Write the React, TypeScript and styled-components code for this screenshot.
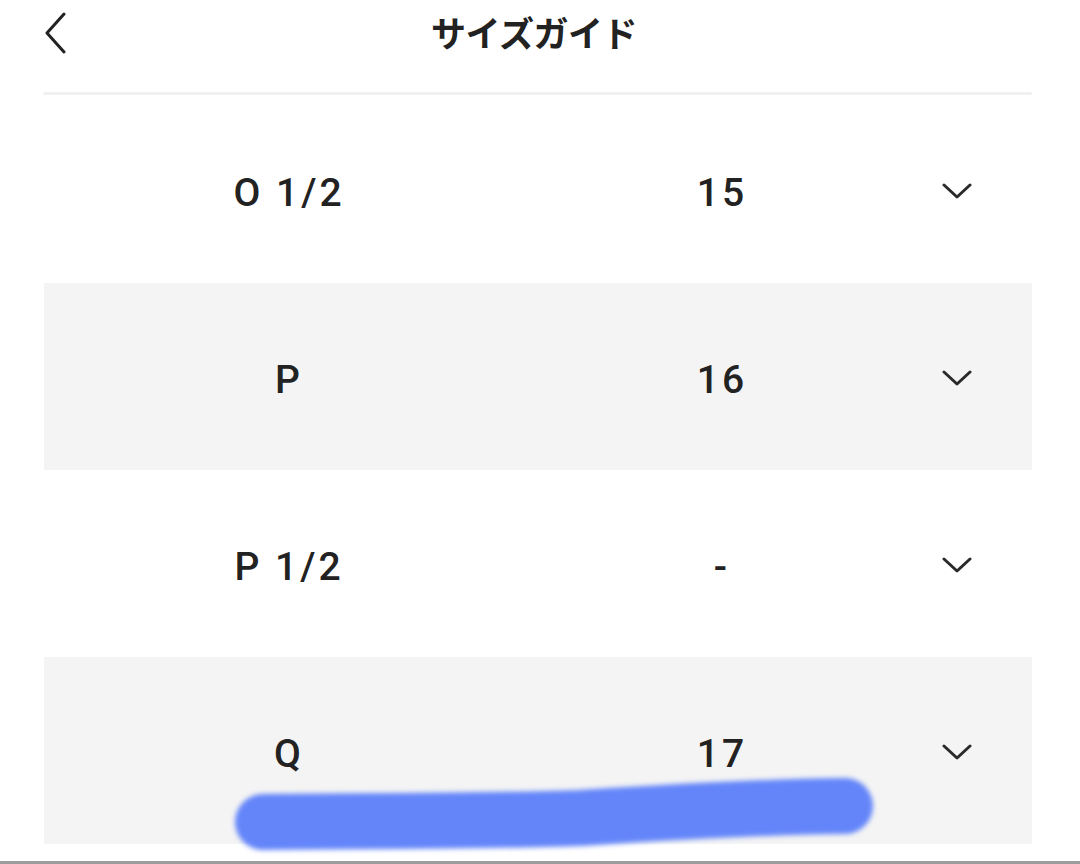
import React from "react";
import styled, { createGlobalStyle } from "styled-components";

const Global = createGlobalStyle`
  html, body { margin: 0; padding: 0; background: #ffffff; }
  body { font-family: Roboto, "Liberation Sans", "Noto Sans CJK JP", sans-serif; color: #222; overflow: hidden; }
`;

const Page = styled.div`
  position: relative;
  width: 1080px;
  height: 864px;
  display: flex;
  flex-direction: column;
  background: #fff;
  overflow: hidden;
`;

const Header = styled.header`
  height: 92px;
  display: grid;
  grid-template-columns: 1fr auto 1fr;
  align-items: start;
  padding: 0 48px 0 44px;
`;

const BackButton = styled.button`
  border: 0;
  background: none;
  padding: 0;
  margin-top: 11px;
  width: 30px;
  height: 44px;
  justify-self: start;
  display: flex;
  align-items: center;
  color: #222;
`;

const Title = styled.h1`
  margin: 11px 8px 0 0;
  font-family: "Noto Sans CJK JP", sans-serif;
  font-weight: 700;
  font-size: 35px;
  line-height: 42px;
  color: #222;
  letter-spacing: -0.5px;
`;

const Divider = styled.div`
  height: 3px;
  margin: 0 48px 0 43px;
  background: #f1f1f1;
  border-radius: 2px;
`;

const List = styled.div`
  margin: 1px 48px 0 44px;
  display: flex;
  flex-direction: column;
`;

const Row = styled.div<{ $shaded: boolean }>`
  height: 187px;
  display: grid;
  grid-template-columns: 490px 376px 94px 1fr;
  align-items: center;
  background: ${(p) => (p.$shaded ? "#f4f4f4" : "#ffffff")};
`;

const Cell = styled.div`
  text-align: center;
  font-family: Roboto, "Liberation Sans", sans-serif;
  font-weight: 500;
  font-size: 39px;
  letter-spacing: 3px;
  color: #222;
  padding-top: 6px;
`;

const Chevron = styled.div`
  display: flex;
  justify-content: center;
  padding-top: 2px;
  color: #2a2a2a;
`;

const Filler = styled.div`
  flex: 1;
`;

const BottomLine = styled.div`
  height: 3px;
  background: #9c9c9c;
`;

const Scribble = styled.svg`
  position: absolute;
  left: 200px;
  top: 750px;
  width: 720px;
  height: 114px;
  pointer-events: none;
`;

const rows = [
  { size: "O 1/2", value: "15" },
  { size: "P", value: "16" },
  { size: "P 1/2", value: "-" },
  { size: "Q", value: "17" },
];

export default function App() {
  return (
    <Page>
      <Global />
      <Header>
        <BackButton aria-label="戻る">
          <svg width="24" height="42" viewBox="0 0 24 42" fill="none">
            <polyline points="20,2 3,21 20,40" stroke="#222" strokeWidth="3" strokeLinecap="round" strokeLinejoin="round" />
          </svg>
        </BackButton>
        <Title>サイズガイド</Title>
        <div />
      </Header>
      <Divider />
      <List>
        {rows.map((r, i) => (
          <Row key={r.size} $shaded={i % 2 === 1}>
            <Cell>{r.size}</Cell>
            <Cell>{r.value}</Cell>
            <Chevron>
              <svg width="30" height="16" viewBox="0 0 30 16" fill="none">
                <polyline points="2,2 15,14 28,2" stroke="#2a2a2a" strokeWidth="3" strokeLinecap="round" strokeLinejoin="round" />
              </svg>
            </Chevron>
            <div />
          </Row>
        ))}
      </List>
      <Filler />
      <BottomLine />
      <Scribble viewBox="0 0 720 114">
        <defs>
          <filter id="soft" filterUnits="userSpaceOnUse" x="0" y="0" width="720" height="114">
            <feGaussianBlur stdDeviation="2.5" />
          </filter>
        </defs>
        <path
          d="M63 72 C 160 71, 300 71, 380 68 C 470 62, 560 57, 645 56"
          stroke="#6485f9"
          strokeWidth="56"
          strokeLinecap="round"
          fill="none"
          filter="url(#soft)"
        />
      </Scribble>
    </Page>
  );
}
